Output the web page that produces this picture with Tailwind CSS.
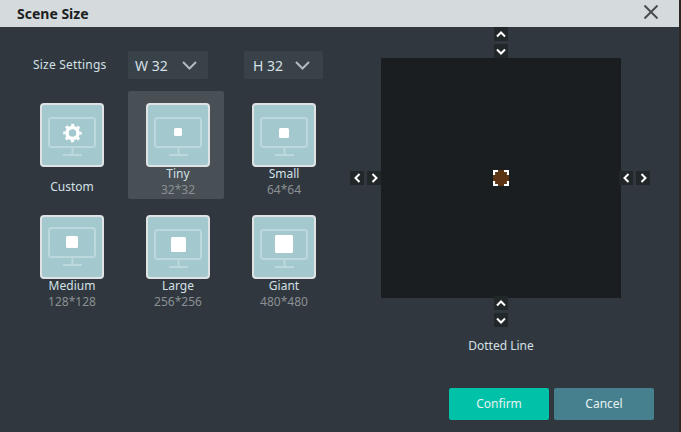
<!DOCTYPE html>
<html><head><meta charset="utf-8"><script src="https://cdn.jsdelivr.net/npm/@tailwindcss/browser@4"></script></head>
<body class="w-[681px] h-[432px] overflow-hidden bg-[#2b2826] font-['Noto_Sans',sans-serif] text-[12px] text-[#d3e0e6]">
<div class="w-[679px] h-[432px] bg-[#30373e]">
<div class="h-[27px] bg-[#d5dadc] flex items-center justify-between pl-[17px] pr-[21px]">
  <span class="text-[14px] font-bold text-[#1b1f22]">Scene Size</span>
  <svg class="mb-[4px]" width="14" height="14" viewBox="0 0 14 14" fill="none" stroke="#4a4d50" stroke-width="2"><path d="M.5.5 13.5 13.5M13.5.5.5 13.5"/></svg>
</div>
<div class="flex">
  <div class="w-[350px] shrink-0 pt-[24px]">
    <div class="flex items-center h-[28px] pl-[33px]">
      <span class="w-[95px] tracking-[0.2px]">Size Settings</span>
      <div class="w-[80px] h-[28px] rounded-[2px] bg-[#3a4249] flex items-center pl-[7px] text-[14px]">W&nbsp;32
        <svg class="ml-[14px]" width="15" height="9" viewBox="0 0 15 9" fill="none" stroke="#b4b9bc" stroke-width="2"><path d="M1 1 7.5 7.5 14 1"/></svg>
      </div>
      <div class="ml-[36px] w-[79px] h-[28px] rounded-[2px] bg-[#3a4249] flex items-center pl-[9px] text-[14px]">H&nbsp;32
        <svg class="ml-[12px]" width="15" height="9" viewBox="0 0 15 9" fill="none" stroke="#b4b9bc" stroke-width="2"><path d="M1 1 7.5 7.5 14 1"/></svg>
      </div>
    </div>
    <div class="grid grid-cols-[96px_96px_96px] gap-x-[10px] pl-[24px] mt-[12px] grid-rows-[108px_108px] gap-y-[4px] text-center leading-[14px]">
      <div class="pt-[12px] flex flex-col items-center">
        <div class="w-[64px] h-[64px] rounded-[4px] border-2 border-[#e0e3e3] bg-[#a3c9cf] flex items-center justify-center">
          <svg class="mt-[4px]" width="48" height="40" viewBox="0 0 48 40" fill="none"><rect x="1" y="1" width="46" height="29" rx="2.5" stroke="#bcd8dc" stroke-width="2"/><path d="M24.5 31v6M15 38h19" stroke="#bcd8dc" stroke-width="2"/><circle cx="24.5" cy="16" r="5.5" stroke="#fff" stroke-width="3.5"/><circle cx="24.5" cy="16" r="8" stroke="#fff" stroke-width="2.5" stroke-dasharray="3 3.28" stroke-dashoffset="1.5"/></svg>
        </div>
        <span class="mt-[13px]">Custom</span>
      </div>
      <div class="pt-[12px] pl-[4px] -ml-[2px] w-[96px] flex flex-col items-center bg-[#484f55] rounded-[2px]">
        <div class="w-[64px] h-[64px] rounded-[4px] border-2 border-[#e0e3e3] bg-[#a3c9cf] flex items-center justify-center">
          <svg class="mt-[4px]" width="48" height="40" viewBox="0 0 48 40" fill="none"><rect x="1" y="1" width="46" height="29" rx="2.5" stroke="#bcd8dc" stroke-width="2"/><path d="M24.5 31v6M15 38h19" stroke="#bcd8dc" stroke-width="2"/><rect x="20" y="11" width="8" height="8" rx="1.5" fill="#fff"/></svg>
        </div>
        <span>Tiny</span><span class="text-[#8b9094] mt-[2px]">32*32</span>
      </div>
      <div class="pt-[12px] flex flex-col items-center">
        <div class="w-[64px] h-[64px] rounded-[4px] border-2 border-[#e0e3e3] bg-[#a3c9cf] flex items-center justify-center">
          <svg class="mt-[4px]" width="48" height="40" viewBox="0 0 48 40" fill="none"><rect x="1" y="1" width="46" height="29" rx="2.5" stroke="#bcd8dc" stroke-width="2"/><path d="M24.5 31v6M15 38h19" stroke="#bcd8dc" stroke-width="2"/><rect x="19" y="11" width="10" height="10" rx="1.5" fill="#fff"/></svg>
        </div>
        <span>Small</span><span class="text-[#8b9094] mt-[2px]">64*64</span>
      </div>
      <div class="pt-[12px] flex flex-col items-center">
        <div class="w-[64px] h-[64px] rounded-[4px] border-2 border-[#e0e3e3] bg-[#a3c9cf] flex items-center justify-center">
          <svg width="48" height="40" viewBox="0 0 48 40" fill="none"><rect x="1" y="1" width="46" height="29" rx="2.5" stroke="#bcd8dc" stroke-width="2"/><path d="M24.5 31v6M15 38h19" stroke="#bcd8dc" stroke-width="2"/><rect x="18" y="9" width="12" height="12" rx="1.5" fill="#fff"/></svg>
        </div>
        <span>Medium</span><span class="text-[#8b9094] mt-[2px]">128*128</span>
      </div>
      <div class="pt-[12px] flex flex-col items-center">
        <div class="w-[64px] h-[64px] rounded-[4px] border-2 border-[#e0e3e3] bg-[#a3c9cf] flex items-center justify-center">
          <svg class="mt-[4px]" width="48" height="40" viewBox="0 0 48 40" fill="none"><rect x="1" y="1" width="46" height="29" rx="2.5" stroke="#bcd8dc" stroke-width="2"/><path d="M24.5 31v6M15 38h19" stroke="#bcd8dc" stroke-width="2"/><rect x="17" y="8" width="15" height="15" rx="1.5" fill="#fff"/></svg>
        </div>
        <span>Large</span><span class="text-[#8b9094] mt-[2px]">256*256</span>
      </div>
      <div class="pt-[12px] flex flex-col items-center">
        <div class="w-[64px] h-[64px] rounded-[4px] border-2 border-[#e0e3e3] bg-[#a3c9cf] flex items-center justify-center">
          <svg class="mt-[4px]" width="48" height="40" viewBox="0 0 48 40" fill="none"><rect x="1" y="1" width="46" height="29" rx="2.5" stroke="#bcd8dc" stroke-width="2"/><path d="M24.5 31v6M15 38h19" stroke="#bcd8dc" stroke-width="2"/><rect x="15" y="6" width="18" height="18" rx="1.5" fill="#fff"/></svg>
        </div>
        <span>Giant</span><span class="text-[#8b9094] mt-[2px]">480*480</span>
      </div>
    </div>
  </div>
  <div class="flex flex-col">
    <div class="grid grid-cols-[31px_240px_31px] grid-rows-[31px_240px_31px]">
      <div></div>
      <div class="flex flex-col items-center">
        <div class="w-[14px] h-[14px] bg-[#22272a] flex items-center justify-center"><svg width="10" height="7" viewBox="0 0 10 7" fill="none" stroke="#fff" stroke-width="2"><path d="M1 5.5 5 1.5 9 5.5"/></svg></div>
        <div class="w-[14px] h-[14px] mt-[3px] bg-[#22272a] flex items-center justify-center"><svg width="10" height="7" viewBox="0 0 10 7" fill="none" stroke="#fff" stroke-width="2"><path d="M1 1.5 5 5.5 9 1.5"/></svg></div>
      </div>
      <div></div>
      <div class="flex items-center">
        <div class="w-[14px] h-[14px] bg-[#22272a] flex items-center justify-center"><svg width="7" height="10" viewBox="0 0 7 10" fill="none" stroke="#fff" stroke-width="2"><path d="M5.5 1 1.5 5 5.5 9"/></svg></div>
        <div class="w-[14px] h-[14px] ml-[3px] bg-[#22272a] flex items-center justify-center"><svg width="7" height="10" viewBox="0 0 7 10" fill="none" stroke="#fff" stroke-width="2"><path d="M1.5 1 5.5 5 1.5 9"/></svg></div>
      </div>
      <div class="bg-[#1a1e21] flex items-center justify-center">
        <div class="w-[16px] h-[16px] bg-[#5a3413] rounded-[3px] relative">
          <svg class="absolute inset-0" width="16" height="16" viewBox="0 0 16 16" fill="none" stroke="#fff" stroke-width="2.2"><path d="M1 5V1H5M11 1H15V5M15 11V15H11M5 15H1V11"/></svg>
        </div>
      </div>
      <div class="flex items-center -ml-[2px]">
        <div class="w-[14px] h-[14px] bg-[#22272a] flex items-center justify-center"><svg width="7" height="10" viewBox="0 0 7 10" fill="none" stroke="#fff" stroke-width="2"><path d="M5.5 1 1.5 5 5.5 9"/></svg></div>
        <div class="w-[14px] h-[14px] ml-[3px] bg-[#22272a] flex items-center justify-center"><svg width="7" height="10" viewBox="0 0 7 10" fill="none" stroke="#fff" stroke-width="2"><path d="M1.5 1 5.5 5 1.5 9"/></svg></div>
      </div>
      <div></div>
      <div class="flex flex-col items-center -mt-[2px]">
        <div class="w-[14px] h-[14px] bg-[#22272a] flex items-center justify-center"><svg width="10" height="7" viewBox="0 0 10 7" fill="none" stroke="#fff" stroke-width="2"><path d="M1 5.5 5 1.5 9 5.5"/></svg></div>
        <div class="w-[14px] h-[14px] mt-[3px] bg-[#22272a] flex items-center justify-center"><svg width="10" height="7" viewBox="0 0 10 7" fill="none" stroke="#fff" stroke-width="2"><path d="M1 1.5 5 5.5 9 1.5"/></svg></div>
      </div>
      <div></div>
    </div>
    <div class="w-[302px] text-center mt-[8px] leading-[18px]">Dotted Line</div>
    <div class="flex gap-[5px] ml-[99px] mt-[33px] text-[#e6f2f2]">
      <div class="w-[100px] h-[32px] rounded-[2px] bg-[#00c2a9] flex items-center justify-center">Confirm</div>
      <div class="w-[100px] h-[32px] rounded-[2px] bg-[#46808e] flex items-center justify-center">Cancel</div>
    </div>
  </div>
</div>
</div>
</body></html>
